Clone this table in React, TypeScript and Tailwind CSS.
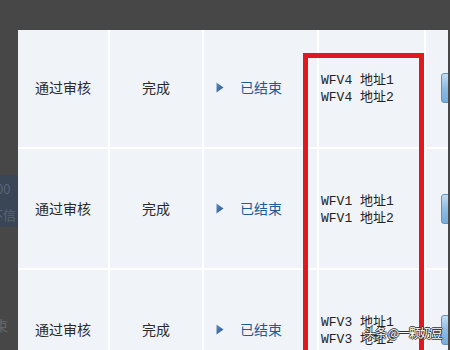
import React from "react";

const rows = ["WFV4", "WFV1", "WFV3"];

function Tri() {
  return (
    <svg width="8" height="11" viewBox="0 0 8 11" className="shrink-0">
      <defs>
        <linearGradient id="tg" x1="0" y1="0" x2="1" y2="1">
          <stop offset="0" stopColor="#5d8cc2" />
          <stop offset="1" stopColor="#245490" />
        </linearGradient>
      </defs>
      <polygon points="0.5,0.5 7.5,5.5 0.5,10.5" fill="url(#tg)" />
    </svg>
  );
}

export default function App() {
  const cjk = { fontFamily: '"Noto Sans CJK SC", "Noto Sans", sans-serif' };
  const mono = { fontFamily: '"Liberation Mono", "Noto Sans CJK SC", monospace' };
  return (
    <div className="relative w-[450px] h-[350px] overflow-hidden bg-[#474747] pt-[30px] pl-[18px]">
      {/* backdrop bits on the left */}
      <div className="absolute left-0 top-[175px] w-[18px] h-[52px] bg-[#3a4555] flex flex-col justify-around text-[13px] leading-none text-[#56657a] overflow-hidden whitespace-nowrap" style={cjk}>
        <span className="-ml-[4px]">00</span>
        <span className="-ml-[10px]">不信</span>
      </div>
      <div className="absolute left-[-6px] top-[318px] text-[14px] leading-none text-[#666] whitespace-nowrap" style={cjk}>束</div>

      <div className="w-[430px] h-[320px] overflow-hidden bg-white">
        <div className="-mt-[2px] grid grid-cols-[90px_92px_113px_105px_22px] auto-rows-[119px] gap-[2px] bg-white">
          {rows.map((r) => (
            <React.Fragment key={r}>
              <div className="bg-[#f0f4f8] flex items-center justify-center text-[14px] text-[#2a2a2a]" style={cjk}>通过审核</div>
              <div className="bg-[#f0f4f8] flex items-center justify-center text-[14px] text-[#2a2a2a]" style={cjk}>完成</div>
              <div className="bg-[#f0f4f8] flex items-center pl-[12px] gap-[16px] text-[14px] text-[#1d5a98]" style={cjk}>
                <Tri />
                <span>已结束</span>
              </div>
              <div className="bg-[#f0f4f8] flex flex-col justify-center pl-[2px] pt-[2px] text-[13px] leading-[17px] text-[#222]" style={mono}>
                <div className="whitespace-pre">{r} 地址1</div>
                <div className="whitespace-pre">{r} 地址2</div>
              </div>
              <div className="bg-[#f0f4f8] flex items-center pl-[15px] overflow-hidden">
                <div className="w-[14px] h-[30px] shrink-0 rounded-[3px] border border-[#5f93c4] bg-[linear-gradient(to_bottom,#c4ddf2,#8dbbe3_50%,#78acdb)]" />
              </div>
            </React.Fragment>
          ))}
        </div>
      </div>

      {/* red highlight box */}
      <div className="absolute left-[303px] top-[53px] w-[121px] h-[320px] border-[5px] border-[#e1191f]" />

      {/* watermark */}
      <div
        className="absolute left-[364px] top-[327px] text-[12px] tracking-[-1px] leading-none text-white whitespace-nowrap [text-shadow:1px_0_0_#333,-1px_0_0_#333,0_1px_0_#333,0_-1px_0_#333]"
        style={cjk}
      >
        头条 @一颗奶豆
      </div>
    </div>
  );
}
